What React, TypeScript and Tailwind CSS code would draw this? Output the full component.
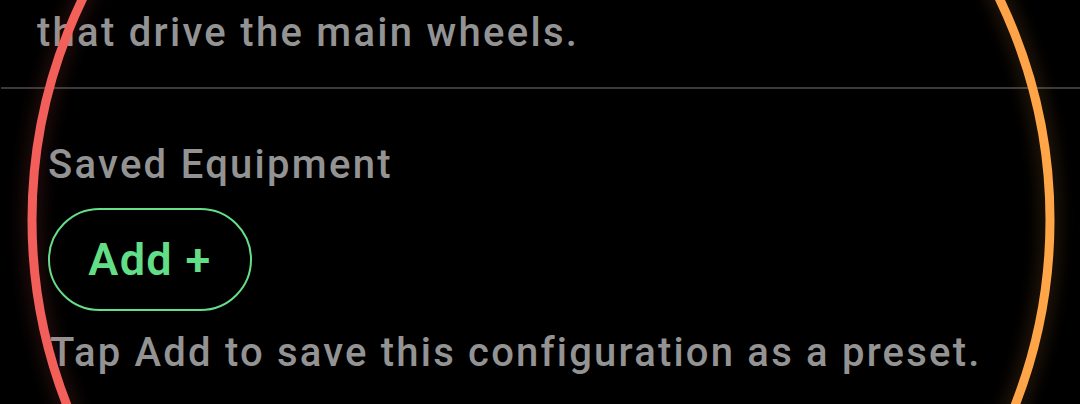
import React from "react";

export default function App() {
  return (
    <div
      className="relative w-[1080px] h-[404px] overflow-hidden bg-black"
      style={{ fontFamily: "Roboto, 'Noto Sans', sans-serif" }}
    >
      <div className="flex flex-col">
        <p className="mt-[9px] pl-[37px] text-[40px] font-medium leading-[48px] tracking-[0.057em] text-[#939393]">
          that drive the main wheels.
        </p>
        <div className="mt-[30px] ml-[1px] h-[2px] bg-[#3a3a3a]" />
        <div className="flex flex-col items-start pl-[48px]">
          <p className="mt-[52px] text-[40px] font-medium leading-[48px] tracking-[0.057em] text-[#939393]">
            Saved Equipment
          </p>
          <button className="mt-[19px] flex h-[103px] w-[204px] items-center justify-center rounded-full border-2 border-[#66dd88] text-[45px] font-semibold tracking-[0.03em] text-[#62de86]">
            Add +
          </button>
          <p className="mt-[18px] ml-[2px] text-[40px] font-medium leading-[48px] tracking-[0.055em] text-[#939393]">
            Tap Add to save this configuration as a preset.
          </p>
        </div>
      </div>
      <svg
        className="pointer-events-none absolute inset-0"
        width="1080"
        height="404"
        viewBox="0 0 1080 404"
      >
        <defs>
          <linearGradient id="ring" x1="0" y1="0" x2="1" y2="0">
            <stop offset="0%" stopColor="#f25e5a" />
            <stop offset="100%" stopColor="#ffa648" />
          </linearGradient>
          <filter id="blur" x="-10%" y="-10%" width="120%" height="120%">
            <feGaussianBlur stdDeviation="8" />
          </filter>
        </defs>
        <circle cx="541" cy="220" r="509" fill="none" stroke="url(#ring)" strokeWidth="22" opacity="0.12" filter="url(#blur)" />
        <circle cx="541" cy="220" r="509" fill="none" stroke="url(#ring)" strokeWidth="9" />
      </svg>
    </div>
  );
}
